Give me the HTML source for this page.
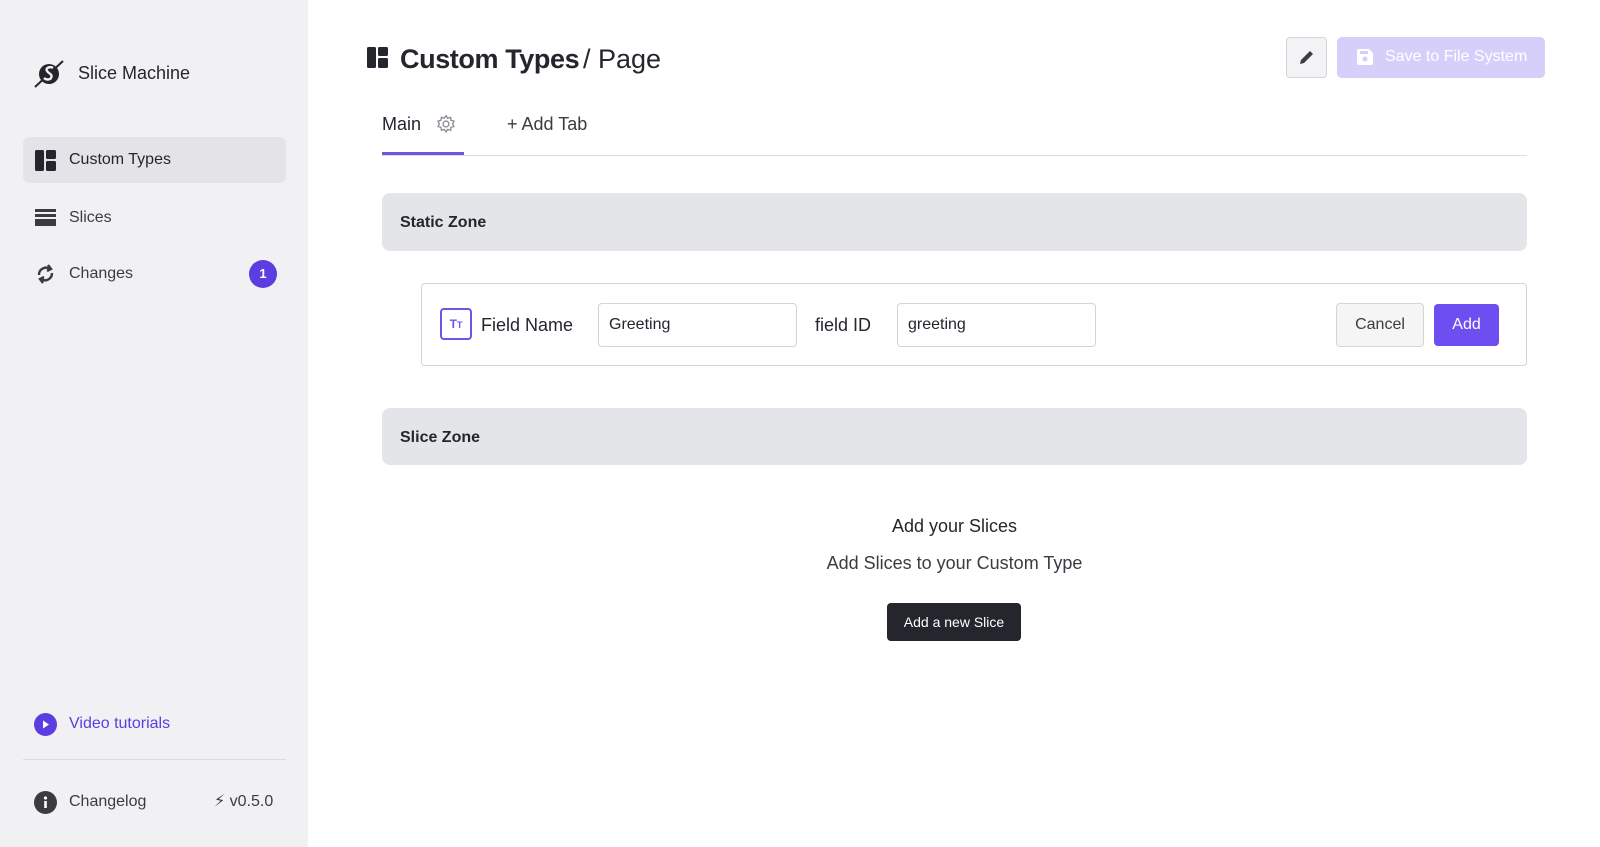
<!DOCTYPE html>
<html><head><meta charset="utf-8"><style>
*{box-sizing:border-box;margin:0;padding:0}
body{width:1600px;height:847px;overflow:hidden;font-family:"Liberation Sans",sans-serif;color:#25252d;background:#fff;position:relative}
.abs{position:absolute}
.side{left:0;top:0;width:308px;height:847px;background:#f1f1f4}
.t{position:absolute;white-space:nowrap;line-height:1}
.input{position:absolute;border:1px solid #d4d4d8;border-radius:4px;background:#fff;font-size:16px;padding-left:10px;line-height:42px}
</style></head><body>
<div class="abs side"></div>
<svg class="abs" style="left:33px;top:58px" width="32" height="32" viewBox="0 0 32 32"><circle cx="16" cy="16" r="10" fill="#25252d"/><line x1="2" y1="29" x2="30" y2="3" stroke="#25252d" stroke-width="2"/><path d="M20 10c-3-2-8 0-6 3s6 3 4 7c-1 2-5 2-7 0" stroke="#f1f1f4" stroke-width="2.4" fill="none"/></svg>
<div class="t" style="left:78px;top:64px;font-size:18px;font-weight:500">Slice Machine</div>
<div class="abs" style="left:23px;top:137px;width:263px;height:46px;background:#e4e4e8;border-radius:7px"></div>
<svg class="abs" style="left:35px;top:150px" width="21" height="21" viewBox="0 0 21 21"><rect x="0" y="0" width="9" height="21" rx="1.5" fill="#25252d"/><rect x="11" y="0" width="10" height="9" rx="1.5" fill="#25252d"/><rect x="11" y="11" width="10" height="10" rx="1.5" fill="#25252d"/></svg>
<div class="t" style="left:69px;top:152px;font-size:16px">Custom Types</div>
<svg class="abs" style="left:35px;top:209px" width="21" height="17" viewBox="0 0 21 17"><rect y="0" width="21" height="3" fill="#3b3b42"/><rect y="5" width="21" height="3" fill="#3b3b42"/><rect y="10" width="21" height="7" fill="#3b3b42"/></svg>
<div class="t" style="left:69px;top:210px;font-size:16px;color:#3b3b42">Slices</div>
<svg class="abs" style="left:35px;top:263px" width="21" height="22" viewBox="0 0 21 22" fill="none" stroke="#3b3b42" stroke-width="2.4"><path d="M4 12a7 7 0 0 1 11-6"/><path d="M17 10a7 7 0 0 1-11 6"/><path d="M13 2l3 4-4 2" fill="#3b3b42"/><path d="M8 20l-3-4 4-2" fill="#3b3b42"/></svg>
<div class="t" style="left:69px;top:266px;font-size:16px;color:#3b3b42">Changes</div>
<div class="abs" style="left:249px;top:260px;width:28px;height:28px;border-radius:50%;background:#5b3de0;color:#fff;font-size:13px;font-weight:700;text-align:center;line-height:28px">1</div>
<svg class="abs" style="left:34px;top:713px" width="23" height="23" viewBox="0 0 23 23"><circle cx="11.5" cy="11.5" r="11.5" fill="#5b3de0"/><path d="M9 7.5v8l6-4z" fill="#fff"/></svg>
<div class="t" style="left:69px;top:716px;font-size:16px;color:#5b3de0">Video tutorials</div>
<div class="abs" style="left:23px;top:759px;width:263px;height:1px;background:#dcdce0"></div>
<svg class="abs" style="left:34px;top:791px" width="23" height="23" viewBox="0 0 23 23"><circle cx="11.5" cy="11.5" r="11.5" fill="#3b3b42"/><rect x="10.2" y="10" width="2.6" height="7" fill="#fff"/><circle cx="11.5" cy="7" r="1.6" fill="#fff"/></svg>
<div class="t" style="left:69px;top:794px;font-size:16px;color:#3b3b42">Changelog</div>
<div class="t" style="left:214px;top:794px;font-size:16px;color:#3b3b42">⚡︎ v0.5.0</div>

<svg class="abs" style="left:367px;top:47px" width="21" height="21" viewBox="0 0 21 21"><rect x="0" y="0" width="9" height="21" rx="1.5" fill="#25252d"/><rect x="11" y="0" width="10" height="9" rx="1.5" fill="#25252d"/><rect x="11" y="11" width="10" height="10" rx="1.5" fill="#25252d"/></svg>
<div class="t" style="left:400px;top:46px;font-size:27px;font-weight:700;letter-spacing:-0.4px">Custom Types</div>
<div class="t" style="left:583px;top:46px;font-size:27px">/ Page</div>
<div class="abs" style="left:1286px;top:37px;width:41px;height:41px;border:1px solid #d4d4d8;border-radius:4px;background:#f3f3f5"></div>
<svg class="abs" style="left:1298px;top:49px" width="17" height="17" viewBox="0 0 17 17"><path d="M2 15l1-4 9-9 3 3-9 9z" fill="#3b3b42"/></svg>
<div class="abs" style="left:1337px;top:37px;width:208px;height:41px;border-radius:5px;background:#d6cffa"></div>
<svg class="abs" style="left:1356px;top:48px" width="18" height="18" viewBox="0 0 18 18"><path d="M1 3a2 2 0 0 1 2-2h10l4 4v10a2 2 0 0 1-2 2H3a2 2 0 0 1-2-2z" fill="#fff"/><circle cx="9" cy="11" r="2.5" fill="#d6cffa"/><rect x="4" y="3" width="8" height="3" fill="#d6cffa"/></svg>
<div class="t" style="left:1385px;top:49px;font-size:16px;color:#fff">Save to File System</div>

<div class="t" style="left:382px;top:115px;font-size:18px;font-weight:500">Main</div>
<svg class="abs" style="left:436px;top:114px" width="20" height="20" viewBox="0 0 24 24" fill="none" stroke="#8a8a94" stroke-width="1.6"><path d="M12 2l2 3 3.5-1 .5 3.5 3.5 1-1.5 3.5 1.5 3-3.5 1-.5 3.5-3.5-1-2 3-2-3-3.5 1-.5-3.5-3.5-1 1.5-3-1.5-3.5 3.5-1 .5-3.5 3.5 1z"/><circle cx="12" cy="12" r="3.5"/></svg>
<div class="t" style="left:507px;top:115px;font-size:18px;color:#3b3b42">+ Add Tab</div>
<div class="abs" style="left:382px;top:155px;width:1145px;height:1px;background:#dcdce0"></div>
<div class="abs" style="left:382px;top:152px;width:82px;height:3px;background:#6d55e8"></div>

<div class="abs" style="left:382px;top:193px;width:1145px;height:58px;background:#e4e5e8;border-radius:8px"></div>
<div class="t" style="left:400px;top:215px;font-size:16px;font-weight:700;color:#25252d">Static Zone</div>

<div class="abs" style="left:421px;top:283px;width:1106px;height:83px;border:1px solid #d4d4d8;border-radius:4px"></div>
<div class="abs" style="left:440px;top:308px;width:32px;height:32px;border:2px solid #6d55e8;border-radius:4px;color:#6d55e8;font-size:12px;font-weight:700;text-align:center;line-height:28px">T<span style="font-size:9px">T</span></div>
<div class="t" style="left:481px;top:316px;font-size:18px;font-weight:500">Field Name</div>
<div class="input" style="left:598px;top:303px;width:199px;height:44px">Greeting</div>
<div class="t" style="left:815px;top:316px;font-size:18px;font-weight:500">field ID</div>
<div class="input" style="left:897px;top:303px;width:199px;height:44px">greeting</div>
<div class="abs" style="left:1336px;top:303px;width:88px;height:44px;border:1px solid #d4d4d8;border-radius:4px;background:#f5f5f6;font-size:16px;text-align:center;line-height:42px;color:#3b3b42">Cancel</div>
<div class="abs" style="left:1434px;top:304px;width:65px;height:42px;border-radius:4px;background:#6d4ef0;font-size:16px;text-align:center;line-height:42px;color:#fff">Add</div>

<div class="abs" style="left:382px;top:408px;width:1145px;height:57px;background:#e4e5e8;border-radius:8px"></div>
<div class="t" style="left:400px;top:430px;font-size:16px;font-weight:700">Slice Zone</div>

<div class="t" style="left:0;width:1909px;text-align:center;top:517px;font-size:18px;font-weight:500">Add your Slices</div>
<div class="t" style="left:0;width:1909px;text-align:center;top:554px;font-size:18px;color:#3b3b42">Add Slices to your Custom Type</div>
<div class="abs" style="left:887px;top:603px;width:134px;height:38px;border-radius:4px;background:#25252d;color:#fff;font-size:14px;text-align:center;line-height:38px">Add a new Slice</div>
</body></html>
